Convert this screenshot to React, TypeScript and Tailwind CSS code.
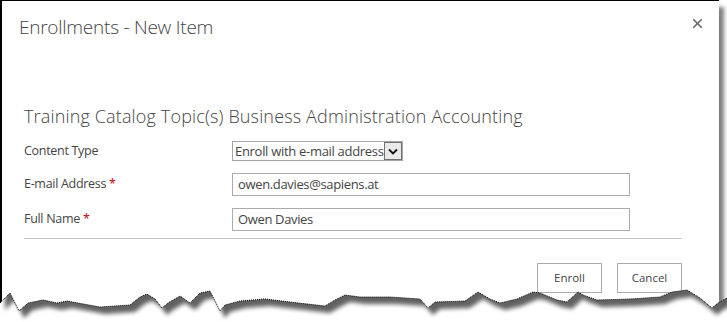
import { X } from "lucide-react";

// jagged bottom edge of the clipped screenshot
const edge: [number, number][] = [
  [0, 303], [10, 293], [19, 311], [28, 303], [43, 300], [57, 303], [67, 301],
  [100, 307], [130, 305], [140, 297], [147, 294], [155, 299], [162, 308],
  [168, 303], [180, 296], [190, 303], [200, 293], [210, 291], [220, 311],
  [225, 305], [240, 301], [265, 299], [290, 302], [325, 306], [335, 300],
  [345, 295], [360, 297], [390, 297], [420, 299], [428, 308], [435, 302],
  [465, 301], [478, 292], [490, 299], [500, 303], [517, 299], [533, 292],
  [540, 293], [557, 300], [567, 302], [578, 292], [583, 295], [597, 300],
  [630, 299], [660, 297], [672, 292], [687, 290], [700, 298], [712, 308],
  [718, 303], [727, 298],
];

const line = edge.map(([x, y]) => `${x},${y}`).join(" ");
const below = `M${edge.map(([x, y]) => `${x},${y}`).join(" L")} L727,322 L0,322 Z`;
const shadow = `M${edge.map(([x, y]) => `${x + 5},${y + 7}`).join(" L")} L732,0 L5,0 Z`;

function TornEdge() {
  return (
    <svg className="pointer-events-none absolute left-0 top-0" width={727} height={322}>
      <defs>
        <clipPath id="below">
          <path d={below} />
        </clipPath>
        <filter id="blur" x="-10%" y="-10%" width="120%" height="120%">
          <feGaussianBlur stdDeviation="2.2" />
        </filter>
      </defs>
      <path d={below} fill="#fff" />
      <g clipPath="url(#below)">
        <path d={shadow} fill="#000" opacity={0.62} filter="url(#blur)" />
      </g>
      <polyline points={line} fill="none" stroke="#000" strokeWidth={1} strokeDasharray="1 1" />
    </svg>
  );
}

function Field({ label, required, children }: { label: string; required?: boolean; children: React.ReactNode }) {
  return (
    <div className="flex items-center">
      <div className="w-[208px] shrink-0 text-[12.5px] tracking-[-0.3px] text-[#444]">
        {label}
        {required && <span className="text-[#bf0000]"> *</span>}
      </div>
      {children}
    </div>
  );
}

export default function App() {
  return (
    <div className="relative h-[322px] w-[727px] overflow-hidden bg-white font-['Open_Sans',sans-serif] text-[#444]">
      <div className="h-[322px] w-[719px] border-l-2 border-t border-black bg-white shadow-[5px_7px_4px_rgba(0,0,0,0.5)]">
        <div className="flex items-start justify-between pl-[17px] pr-[10px] pt-[12px]">
          <h1 className="text-[19px] font-light leading-[28px] tracking-[-0.25px] text-[#444]">Enrollments - New Item</h1>
          <button className="-mt-[1px] p-1 text-[#6a6a6a]">
            <X size={15} strokeWidth={2.8} />
          </button>
        </div>

        <div className="pl-[22px] pr-[36px] pt-[63px]">
          <h2 className="text-[18px] font-light leading-[24px] tracking-[0.15px] text-[#444]">
            Training Catalog Topic(s) Business Administration Accounting
          </h2>

          <div className="mt-[13px] flex flex-col gap-[12px]">
            <Field label="Content Type">
              <div className="flex h-[20px] w-[171px] items-stretch border border-[#a6a6a6] bg-white">
                <span className="flex-1 pl-[2px] text-[13px] leading-[18px] tracking-[-0.3px] whitespace-nowrap">Enroll with e-mail address</span>
                <span className="flex w-[18px] items-center justify-center border border-[#707070] bg-[#e9e9e9]">
                  <svg width="10" height="7" viewBox="0 0 10 7">
                    <path d="M1 1.5 L5 5.5 L9 1.5" fill="none" stroke="#111" strokeWidth="1.8" />
                  </svg>
                </span>
              </div>
            </Field>
            <Field label="E-mail Address" required>
              <div className="flex h-[23px] w-[398px] items-center border border-[#ababab] pl-[5px] text-[13px] tracking-[-0.35px]">
                owen.davies@sapiens.at
              </div>
            </Field>
            <Field label="Full Name" required>
              <div className="flex h-[23px] w-[398px] items-center border border-[#ababab] pl-[5px] text-[13px] tracking-[-0.35px]">
                Owen Davies
              </div>
            </Field>
          </div>

          <div className="mt-[7px] h-px w-[658px] bg-[#c6c6c6]" />

          <div className="mt-[24px] flex justify-end gap-[15px] pr-[1px]">
            <button className="h-[30px] w-[65px] border border-[#ababab] bg-white text-[11.5px] text-[#444]">Enroll</button>
            <button className="h-[30px] w-[65px] border border-[#ababab] bg-white text-[11.5px] text-[#444]">Cancel</button>
          </div>
        </div>
      </div>
      <TornEdge />
    </div>
  );
}
